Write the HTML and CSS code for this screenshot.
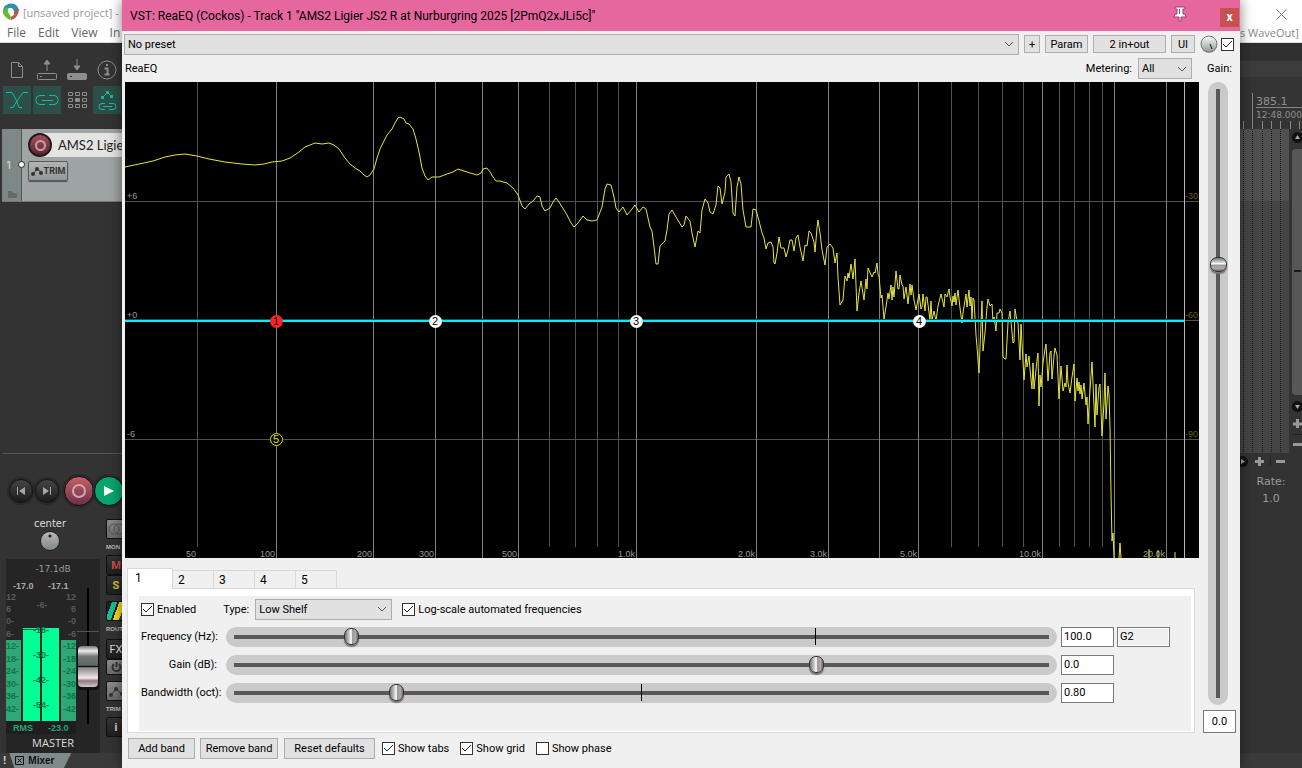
FILE: index.html
```
<!DOCTYPE html>
<html lang="en">
<head>
  <meta charset="UTF-8">
  <title>VST: ReaEQ (Cockos)</title>
  <link rel="stylesheet" href="styles.css">
</head>
<body>

<!-- Main window, left edge -->
<div class="host host-left">
  <div class="host-top">
    <div class="host-title">
      <svg class="logo" width="18" height="18" viewBox="0 0 18 18">
        <path d="M2 4C5 0 12-1 15 3l2 4-4 2-3-4-5 0-4 3z" fill="#2a8fb0"/>
        <path d="M1 7l4-3 2 2-2 4-4 1z" fill="#57b947"/>
        <path d="M12 8l5-2c0 5-3 10-8 11l-1-3 4-2z" fill="#b9594f"/>
        <path d="M1 8l4-1 4 7-1 3C4 15 1 12 1 8z" fill="#63bb2f"/>
        <path d="M6 6l3-1 3 4-3 5z" fill="#fff"/>
      </svg>
      <span>[unsaved project] -</span>
    </div>
    <nav class="menu">
      <a href="#">File</a><a href="#">Edit</a><a href="#">View</a><a href="#">In</a>
    </nav>
  </div>

  <div class="tools">
    <button class="tool" aria-label="New project"><svg width="28" height="28" viewBox="0 0 28 28"><path d="M8.500 6.500h7l4 4v11h-11zM15.500 6.500v4h4" /></svg></button>
    <button class="tool" aria-label="Open project"><svg width="28" height="28" viewBox="0 0 28 28"><path d="M14 15V5M11 8l3-4 3 4z" fill="#8c8f8e"/><rect x="4.500" y="17.500" width="19" height="6" rx="1"/><path d="M7 20.500h2" /></svg></button>
    <button class="tool" aria-label="Save project"><svg width="28" height="28" viewBox="0 0 28 28"><path d="M14 3v10M11 10l3 4 3-4z" fill="#8c8f8e"/><rect x="4.500" y="17.500" width="19" height="6" rx="1" fill="#8c8f8e"/><path d="M7 20.500h2" stroke="#333"/></svg></button>
    <button class="tool" aria-label="Project settings"><svg width="28" height="28" viewBox="0 0 28 28"><circle cx="14" cy="14" r="9"/><path d="M11.500 12.500h3v6M11.500 18.500h5M14 8v2" stroke-width="2"/></svg></button>
    <button class="tool on" aria-label="Auto-crossfade"><svg width="28" height="28" viewBox="0 0 28 28"><path d="M3 6.500h6l4 7 3 8h3M25 6.500h-5l-5 7-5 8H7"/></svg></button>
    <button class="tool on" aria-label="Item grouping"><svg width="28" height="28" viewBox="0 0 28 28"><path d="M12 9.500H7a4 4 0 0 0-4 4v1a4 4 0 0 0 4 4h5M16 9.500h5a4 4 0 0 1 4 4v1a4 4 0 0 1-4 4h-5M9 14.500h11"/></svg></button>
    <button class="tool" aria-label="Ripple editing"><svg width="28" height="28" viewBox="0 0 28 28"><path d="M5.500 6.500h4v3h-4zM12.500 6.500h4v3h-4zM19.500 6.500h4v3h-4zM5.500 12.500h4v3h-4zM19.500 12.500h4v3h-4zM5.500 18.500h4v3h-4zM12.500 18.500h4v3h-4zM19.500 18.500h4v3h-4z"/><path d="M12.500 12.500h4v3h-4z" fill="#8c8f8e"/></svg></button>
    <button class="tool on" aria-label="Move envelope points"><svg width="28" height="28" viewBox="0 0 28 28"><path d="M9.500 11.500l5-5 4 4"/><path d="M8.500 10.500h2v2h-2zM13.500 5.500h2v2h-2zM17.500 9.500h2v2h-2z" fill="#1abc98"/><path d="M12 17.500H9q-3 0-3 3t3 3h3M16 17.500h4q3 0 3 3t-3 3h-4M10 20.500h9"/></svg></button>
  </div>

  <div class="track">
    <div class="track-num">1
      <svg class="folder" width="9" height="7" viewBox="0 0 9 7"><path d="M0 0h4l1 2h4v5H0z" fill="#656b69"/></svg>
      <span class="track-io"></span>
    </div>
    <div class="track-main">
      <div class="track-name"><button class="rec" aria-label="Record arm"><span></span></button><span>AMS2 Ligie</span></div>
      <button class="trim"><svg width="12" height="10" viewBox="0 0 12 10"><path d="M2 8l4-5 4 3" fill="none" stroke="#333" stroke-width="1"/><circle cx="2" cy="8" r="2"/><circle cx="6" cy="3" r="2"/><circle cx="10" cy="7" r="2"/></svg>TRIM</button>
    </div>
  </div>

  <div class="transport">
    <button class="tbtn" aria-label="Go to start"><svg width="10" height="10" viewBox="0 0 10 10"><path d="M1 1h1v8H1zM9 1v8L3 5z" fill="#a5a8a7"/></svg></button>
    <button class="tbtn" aria-label="Go to end"><svg width="10" height="10" viewBox="0 0 10 10"><path d="M8 1h1v8H8zM1 1v8l6-4z" fill="#a5a8a7"/></svg></button>
    <button class="tbtn record" aria-label="Record"><span></span></button>
    <button class="tbtn play" aria-label="Play"><svg width="12" height="12" viewBox="0 0 12 12"><path d="M1 1v10l10-5z" fill="#fff"/></svg></button>
  </div>

  <div class="mixer">
    <div class="master">
      <div class="pan">center<span class="pan-knob"></span></div>
      <svg class="meter" width="94" height="194" viewBox="6 559 94 194">
        <rect x="6" y="559" width="94" height="194" fill="#252525"/>
        <rect x="6" y="721" width="70" height="13" fill="#1e1e1e"/>
        <path d="M6 640h15v81H6zM61 640h15v81H61z" fill="#2fa877"/>
        <path d="M23 628h17v93H23zM42 628h17v93H42z" fill="#00ff95"/>
        <path d="M23 629.500h17" stroke="#0b6d43"/>
        <text class="peak" x="53" y="572" text-anchor="middle">-17.1dB</text>
        <g class="val"><text x="13" y="589">-17.0</text><text x="48" y="589">-17.1</text></g>
        <g class="scale">
          <text x="6" y="600">12</text><text x="6" y="612">6</text><text x="6" y="624">0-</text><text x="6" y="637">6-</text>
          <text x="76" y="600" text-anchor="end">12</text><text x="76" y="612" text-anchor="end">6</text><text x="76" y="624" text-anchor="end">-0</text><text x="76" y="637" text-anchor="end">-6</text>
          <text x="42" y="608" text-anchor="middle">-6-</text>
        </g>
        <g class="scale lit">
          <text x="6" y="649">12-</text><text x="6" y="662">18-</text><text x="6" y="674">24-</text><text x="6" y="687">30-</text><text x="6" y="699">36-</text><text x="6" y="712">42-</text>
          <text x="76" y="649" text-anchor="end">-12</text><text x="76" y="662" text-anchor="end">-18</text><text x="76" y="674" text-anchor="end">-24</text><text x="76" y="687" text-anchor="end">-30</text><text x="76" y="699" text-anchor="end">-36</text><text x="76" y="712" text-anchor="end">-42</text>
          <text x="41" y="633" text-anchor="middle">-18-</text><text x="41" y="658" text-anchor="middle">-30-</text><text x="41" y="683" text-anchor="middle">-42-</text><text x="41" y="708" text-anchor="middle">-54-</text>
        </g>
        <g class="rms"><text x="13" y="731">RMS</text><text x="48" y="731">-23.0</text></g>
        <path d="M88 588v136" stroke="#000" stroke-width="2"/>
        <path d="M77 631.500h22" stroke="#555"/>
        <defs>
          <linearGradient id="cap" x2="0" y2="1">
            <stop offset="0" stop-color="#777"/><stop offset=".12" stop-color="#eee"/><stop offset=".25" stop-color="#777"/><stop offset=".47" stop-color="#5b6663"/><stop offset=".5" stop-color="#111"/><stop offset=".53" stop-color="#888"/><stop offset=".78" stop-color="#f3e6ea"/><stop offset=".85" stop-color="#96737d"/><stop offset="1" stop-color="#ccc"/>
          </linearGradient>
        </defs>
        <rect x="77" y="646" width="22" height="44" rx="4" fill="#111"/>
        <rect x="78" y="646" width="20" height="41" rx="4" fill="url(#cap)"/>
        <text class="mname" x="53" y="747" text-anchor="middle">MASTER</text>
      </svg>
    </div>
    <div class="strip">
      <button class="sbtn light" aria-label="Mono"><svg width="20" height="18" viewBox="0 0 20 18"><g fill="none" stroke="#555"><circle cx="7" cy="9" r="5"/><circle cx="12" cy="9" r="5"/></g></svg></button>
      <small>MON</small>
      <button class="sbtn mute">M</button>
      <button class="sbtn solo">S</button>
      <button class="sbtn route" aria-label="Routing"></button>
      <small>ROUT</small>
      <button class="sbtn fx">FX</button>
      <button class="sbtn light power" aria-label="Bypass"><svg width="20" height="14" viewBox="0 0 20 14"><path d="M7 4a4 4 0 1 0 5 0M9.500 2v5" fill="none" stroke="#333" stroke-width="2"/></svg></button>
      <button class="sbtn light env" aria-label="Envelopes"><svg width="20" height="16" viewBox="0 0 20 16"><path d="M4 12l5-6 6 5" fill="none" stroke="#333"/><circle cx="4" cy="12" r="2"/><circle cx="9" cy="6" r="2"/><circle cx="15" cy="11" r="2"/></svg></button>
      <small>TRIM</small>
      <button class="sbtn info">i</button>
    </div>
  </div>
  <div class="docker"><span>!</span><button class="dock-tab"><svg width="9" height="9" viewBox="0 0 9 9"><path d="M.5.5h8v8h-8zM2.500 2.500l4 4M6.500 2.500l-4 4" fill="none" stroke="#111"/></svg>Mixer</button></div>
</div>

<!-- Plugin window -->
<main class="plugin">
  <header class="titlebar">
    <h1>VST: ReaEQ (Cockos) - Track 1 "AMS2 Ligier JS2 R at Nurburgring 2025 [2PmQ2xJLi5c]"</h1>
    <button class="pin" aria-label="Pin window"><svg width="14" height="18" viewBox="0 0 14 18"><path d="M2 2h10v2h-2v5h2l1 3H8v4H6v-4H1l1-3h2V4H2z" fill="#fff" stroke="#a13b69"/><path d="M6.500 4v5" stroke="#a13b69"/></svg></button>
    <button class="close" aria-label="Close">x</button>
  </header>

  <div class="presets">
    <select class="preset" aria-label="Preset"><option>No preset</option></select>
    <button class="btn b-plus">+</button>
    <button class="btn b-param">Param</button>
    <button class="btn b-io">2 in+out</button>
    <button class="btn b-ui">UI</button>
    <svg class="wet" width="18" height="18" viewBox="0 0 18 18">
      <defs><linearGradient id="wet" x2="0" y2="1"><stop offset="0" stop-color="#fafafa"/><stop offset="1" stop-color="#919b9a"/></linearGradient></defs>
      <circle cx="9" cy="10" r="8" fill="#aaa"/><circle cx="9" cy="9" r="8" fill="url(#wet)" stroke="#777"/><path d="M10 9l2 5" stroke="#111" stroke-width="1"/>
    </svg>
    <input type="checkbox" aria-label="FX enabled" checked>
  </div>

  <div class="eq">
    <section class="eq-main">
      <div class="eq-head">
        <span>ReaEQ</span>
        <label for="metering">Metering:</label>
        <select id="metering"><option>All</option></select>
      </div>

      <svg class="plot" viewBox="125 82 1074 476">
        <rect x="125" y="82" width="1074" height="476" fill="#000"/>
        <g shape-rendering="crispEdges">
          <path class="minor" d="M197.500 82v465M549.500 82v465M575.500 82v465M597.500 82v465M618.500 82v465M951.500 82v465M978.500 82v465M1002.500 82v465M1023.500 82v465M1059.500 82v465M1074.500 82v465M1089.500 82v465M1102.500 82v465"/>
          <path class="minor" d="M125 201.500h1074M125 320.500h1074M125 439.500h1074"/>
          <path class="major" d="M276.500 82v476M373.500 82v476M435.500 82v476M482.500 82v476M518.500 82v476M636.500 82v476M756.500 82v476M828.500 82v476M879.500 82v476M918.500 82v476M1042.500 82v476M1114.500 82v476M1166.500 82v476"/>
          <path class="edge" d="M1184.500 82v476"/>
        </g>
        <g class="axis">
          <text x="127" y="199">+6</text><text x="127" y="318">+0</text><text x="127" y="437">-6</text>
        </g>
        <g class="axis" text-anchor="end">
          <text x="196" y="557">50</text><text x="275" y="557">100</text><text x="372" y="557">200</text><text x="434" y="557">300</text><text x="517" y="557">500</text><text x="635" y="557">1.0k</text><text x="755" y="557">2.0k</text><text x="827" y="557">3.0k</text><text x="917" y="557">5.0k</text><text x="1041" y="557">10.0k</text><text x="1165" y="557">20.0k</text>
        </g>
        <g class="axis db">
          <text x="1185" y="199">-30</text><text x="1185" y="318">-60</text><text x="1185" y="437">-90</text>
        </g>
        <path class="spectrum" d="M125 167L139 164 153 161 165 157 175 155 185 154 197 156 209 159 225 162 242 164 255 165 264 164 272 162 282 161 290 158 299 152 305 147 310 145 315 143 322 144 329 143 334 145 339 149 345 158 350 164 355 168 360 171 364 175 367 177 370 175 374 169 377 158 380 149 384 141 387 135 392 129 395 123 398 118 400 117 404 119 406 123 409 124 413 129 416 139 419 152 422 168 425 176 428 180 432 177 439 177 447 174 453 172 458 169 467 172 477 175 481 173 483 169 487 168 490 172 493 177 496 181 500 181 507 183 513 188 518 195 522 206 525 209 529 204 533 201 537 196 540 197 542 206 545 211 550 208 553 202 556 198 559 202 567 215 571 223 574 227 578 223 583 216 587 220 592 221 597 220 602 207 605 189 607 184 611 185 614 197 616 208 619 212 623 207 627 215 632 209 635 205 639 212 643 207 646 209 648 218 650 227 652 231 654 247 656 264 658 264 660 246 665 241 667 230 669 214 672 210 676 217 682 227 684 225 686 216 690 221 692 233 695 247 698 231 700 233 702 210 705 199 708 203 710 212 713 214 716 205 718 186 720 188 722 204 725 192 726 177 729 174 731 182 733 213 735 216 737 187 739 177 741 184 743 210 746 227 751 227 753 209 756 210 759 221 762 233 764 238 766 249 768 243 771 242 773 247 774 263 775 264 777 253 779 237 781 248 784 248 786 257 788 250 790 240 792 240 794 251 796 238 798 235 800 247 803 261 805 245 807 246 809 231 811 233 814 242 815 252 817 228 818 220 820 233 822 250 825 265 827 247 830 244 833 248 835 263 837 253 838 277 840 305 843 300 845 276 847 281 848 273 849 278 851 264 853 279 855 259 857 311 859 293 861 281 864 300 866 279 867 289 868 268 872 277 874 272 875 273 877 263 878 274 879 276 881 298 882 295 884 319 886 307 888 293 889 299 891 285 892 300 893 287 894 297 896 271 898 289 899 289 900 275 902 285 903 286 904 299 906 287 908 304 910 284 911 295 912 285 914 300 916 310 919 294 921 309 922 307 923 294 925 311 926 297 927 297 930 320 931 301 932 320 934 311 936 321 938 306 941 294 944 307 945 294 947 297 949 289 950 297 952 306 953 296 954 302 955 293 956 305 958 290 960 308 962 323 963 313 966 294 967 307 969 290 970 306 971 297 972 319 973 298 974 300 976 335 977 347 979 373 980 347 982 301 983 351 985 333 987 307 988 299 990 306 992 304 993 322 994 317 996 331 997 313 999 313 1000 309 1002 313 1003 357 1005 359 1006 359 1008 323 1010 311 1013 343 1014 342 1015 309 1017 321 1018 323 1020 360 1021 324 1024 380 1026 354 1027 367 1029 356 1030 369 1032 389 1033 363 1034 389 1037 360 1038 353 1039 406 1040 375 1041 387 1043 363 1045 349 1046 344 1048 381 1050 353 1051 351 1052 379 1054 356 1055 348 1057 355 1059 399 1061 366 1063 391 1065 383 1066 387 1067 365 1068 383 1070 393 1072 377 1074 364 1075 401 1077 378 1078 391 1079 382 1080 394 1081 385 1082 399 1084 383 1086 405 1087 397 1088 424 1090 390 1092 362 1095 427 1096 384 1097 415 1099 387 1100 384 1102 436 1104 403 1105 373 1106 419 1108 386 1109 395 1110 427 1111 493 1112 541 1113 533 1114 558M1119 558l1-15 1 15M1149 558v-9M1158 558v-8M1175 558v-6"/>
        <path d="M125 320.500h1059" stroke="#075c5c" stroke-width="3"/>
        <path d="M125 320.500h1059" stroke="#00f0ff" stroke-width="2" shape-rendering="crispEdges"/>
        <g class="nodes">
          <circle cx="276.500" cy="321.500" r="6.500"/><text x="276" y="325">1</text>
          <circle cx="435.500" cy="321.500" r="6.500"/><text x="435" y="325">2</text>
          <circle cx="636.500" cy="321.500" r="6.500"/><text x="636" y="325">3</text>
          <circle cx="919.500" cy="321.500" r="6.500"/><text x="919" y="325">4</text>
          <circle cx="276.500" cy="439.500" r="6" class="off"/><text x="276" y="443" class="off-text">5</text>
        </g>
      </svg>

      <div class="tabs" role="tablist">
        <button role="tab" aria-selected="true" class="tab active">1</button>
        <button role="tab" class="tab">2</button>
        <button role="tab" class="tab">3</button>
        <button role="tab" class="tab">4</button>
        <button role="tab" class="tab">5</button>
      </div>
      <div class="panel">
        <div class="band">
          <div class="band-head">
            <label class="check"><input type="checkbox" checked>Enabled</label>
            <label class="type-label" for="type">Type:</label>
            <select id="type"><option>Low Shelf</option></select>
            <label class="check"><input type="checkbox" checked>Log-scale automated frequencies</label>
          </div>
          <div class="param">
            <label for="freq">Frequency (Hz):</label>
            <input class="slider freq" id="freq" type="range" min="0" max="1000" value="144">
            <input class="num" type="text" value="100.0" aria-label="Frequency value">
            <input class="num note" type="text" value="G2" aria-label="Note" readonly>
          </div>
          <div class="param">
            <label for="gain">Gain (dB):</label>
            <input class="slider" id="gain" type="range" min="0" max="1000" value="715">
            <input class="num" type="text" value="0.0" aria-label="Gain value">
          </div>
          <div class="param">
            <label for="bw">Bandwidth (oct):</label>
            <input class="slider bw" id="bw" type="range" min="0" max="1000" value="200">
            <input class="num" type="text" value="0.80" aria-label="Bandwidth value">
          </div>
        </div>
      </div>

      <footer class="actions">
        <button class="btn b-add">Add band</button>
        <button class="btn b-remove">Remove band</button>
        <button class="btn b-reset">Reset defaults</button>
        <label class="check"><input type="checkbox" checked>Show tabs</label>
        <label class="check"><input type="checkbox" checked>Show grid</label>
        <label class="check"><input type="checkbox">Show phase</label>
      </footer>
    </section>

    <section class="master-gain">
      <label for="mgain">Gain:</label>
      <input class="vslider" id="mgain" type="range" min="0" max="1000" value="713">
      <input class="num gain-num" type="text" value="0.0" aria-label="Master gain value">
    </section>
  </div>
</main>

<!-- Main window, right edge -->
<div class="host host-right">
  <div class="host-top">
    <button class="host-close" aria-label="Close project"><svg width="11" height="11" viewBox="0 0 11 11"><path d="M.5.5l10 10M10.500.5l-10 10" stroke="#777"/></svg></button>
    <span class="device">s WaveOut]</span>
  </div>
  <svg class="arrange" width="62" height="430" viewBox="1240 43 62 430">
    <rect x="1240" y="43" width="62" height="18" fill="#303030"/>
    <rect x="1240" y="61" width="62" height="16" fill="#3c3c3c"/>
    <rect x="1240" y="77" width="62" height="52" fill="#343434"/>
    <rect x="1240" y="129" width="49" height="324" fill="#454545"/>
    <rect x="1240" y="129" width="49" height="72" fill="#505050"/>
    <path d="M1243.500 129v323M1252.500 129v323M1262.500 129v323M1271.500 129v323M1280.500 129v323" stroke="#191919" stroke-dasharray="1 1"/>
    <path d="M1252.500 93v36M1243.500 121v8M1262.500 121v8M1271.500 121v8M1280.500 121v8M1290.500 121v8M1299.500 121v8M1256 107.500h46" stroke="#858585"/>
    <g class="ruler"><text class="bar" x="1256" y="105">385.1</text><text x="1256" y="118">12:48.000</text></g>
    <rect x="1292" y="149" width="14" height="246" rx="4" fill="#575757"/>
    <path d="M1294 271h7" stroke="#1a1a1a" stroke-width="2"/>
    <g fill="#111"><circle cx="1297.500" cy="137.500" r="5.500"/><circle cx="1297.500" cy="406.500" r="5.500"/><circle cx="1242.500" cy="461.500" r="5.500"/></g>
    <g fill="#aaa"><path d="M1295 139h5l-2.500-4zM1295 405h5l-2.500 4zM1241 459v5l4-2.500z"/></g>
    <path d="M1293 424h9M1297.500 419v9M1293 444.500h9M1255 461.500h9M1259.500 457v9M1276 461.500h9" stroke="#999" stroke-width="3"/>
    <path d="M1293 434.500h9M1270.500 457v9" stroke="#222"/>
  </svg>
  <div class="rate">Rate:<br>1.0</div>
  <div class="host-bottom"></div>
</div>

</body>
</html>
```
FILE: styles.css
```
* {
  box-sizing: border-box;
}
body {
  margin: 0;
  height: 100vh;
  display: flex;
  overflow: hidden;
  background: #333;
  font-family: Roboto, sans-serif;
  font-size: 11px;
  color: #000;
}
button, input, select {
  font: inherit;
  color: inherit;
  margin: 0;
}
button {
  padding: 0;
  border: none;
  background: none;
}

/* Main window behind the plugin */
.host {
  flex: none;
  display: flex;
  flex-direction: column;
  overflow: hidden;
  background: #333;
  color: #999;
}
.host-left {
  width: 122px;
}
.host-right {
  width: 62px;
}
.host-top {
  flex: none;
  height: 43px;
  background: #fff;
  border-bottom: 1px solid #ddd;
  font-family: "Open Sans", sans-serif;
  white-space: nowrap;
}
.host-title {
  display: flex;
  align-items: center;
  gap: 3px;
  height: 24px;
  padding-left: 2px;
}
.host-title .logo {
  flex: none;
}
.menu {
  display: flex;
  gap: 12px;
  padding-left: 7px;
  font-size: 12px;
  line-height: 18px;
}
.menu a {
  color: #666;
  text-decoration: none;
}
.tools {
  display: grid;
  grid-template-columns: repeat(4, 28px);
  gap: 2px;
  padding: 13px 0 0 3px;
}
.tool {
  height: 28px;
}
.tool svg {
  display: block;
  fill: none;
  stroke: #8c8f8e;
}
.tool.on {
  background: #2c4f49;
}
.tool.on svg {
  stroke: #1abc98;
}
.track {
  flex: none;
  display: flex;
  height: 73px;
  margin: 15px 0 0 2px;
  border-bottom: 1px solid #777;
}
.track-num {
  position: relative;
  flex: none;
  display: flex;
  width: 20px;
  align-items: center;
  padding-left: 4px;
  background: #7e8886;
  border-right: 1px solid #555;
  color: #e8dfd5;
}
.folder {
  position: absolute;
  left: 6px;
  bottom: 3px;
}
.track-io {
  position: absolute;
  right: -4px;
  top: 32px;
  width: 7px;
  height: 7px;
  border: 1px solid #222;
  border-radius: 50%;
  background: #fff;
}
.track-main {
  flex: 1;
  min-width: 0;
  padding: 4px 0 0 6px;
  background: #9fa5a4;
}
.track-name {
  display: flex;
  align-items: center;
  gap: 6px;
  height: 24px;
  background: linear-gradient(to right, transparent 12px, #e4e5e3 12px);
  font-family: Lato, sans-serif;
  font-size: 13px;
  color: #222;
  white-space: nowrap;
}
.rec {
  flex: none;
  display: grid;
  place-items: center;
  width: 24px;
  height: 24px;
  border: 2px solid #221a1b;
  border-radius: 50%;
  background: linear-gradient(#a4525c, #5c2633);
}
.rec span {
  width: 11px;
  height: 11px;
  border: 2px solid #c7a0a4;
  border-radius: 50%;
}
.trim {
  display: flex;
  align-items: center;
  justify-content: center;
  gap: 1px;
  width: 40px;
  height: 20px;
  margin-top: 4px;
  border: 1px solid #555b59;
  border-radius: 2px;
  background: linear-gradient(#b0b5b4, #929897);
  box-shadow: 0 1px 1px #555;
  font-size: 9px;
  font-weight: bold;
  color: #333;
}
.trim svg, .env svg {
  fill: #333;
}
.transport {
  flex: none;
  display: flex;
  align-items: center;
  gap: 2px;
  height: 74px;
  margin: 251px 0 0 2px;
  padding-left: 7px;
  border-top: 1px solid #555;
}
.tbtn {
  flex: none;
  display: grid;
  place-items: center;
  width: 24px;
  height: 24px;
  border: 1px solid #111;
  border-radius: 50%;
  background: linear-gradient(#454545, #1c1c1c);
  box-shadow: 0 0 0 2px #292929;
}
.tbtn.record, .tbtn.play {
  width: 30px;
  height: 30px;
}
.tbtn.record {
  margin-left: 3px;
  background: linear-gradient(#c65f6a, #6b3148);
}
.tbtn.record span {
  width: 14px;
  height: 14px;
  border: 2px solid #d3a5ad;
  border-radius: 50%;
}
.tbtn.play {
  margin-left: -2px;
  background: #07a56d;
}
.mixer {
  flex: none;
  display: flex;
  gap: 6px;
  height: 226px;
  padding-left: 6px;
}
.master {
  flex: none;
  width: 94px;
  margin-top: -10px;
}
.pan {
  display: flex;
  flex-direction: column;
  align-items: center;
  height: 42px;
  padding-right: 6px;
  font: 10px/14px "DejaVu Sans", sans-serif;
  color: #ddd;
}
.pan-knob {
  width: 20px;
  height: 20px;
  border: 1px solid #222;
  border-radius: 50%;
  background: radial-gradient(circle at 50% 4px, #222 1px, transparent 2px), linear-gradient(#b6baba, #808585);
}
.meter {
  display: block;
  font-family: "Liberation Sans", sans-serif;
  font-size: 10px;
}
.meter .peak {
  font-family: "DejaVu Sans", sans-serif;
  font-size: 9px;
  fill: #999;
}
.meter .val {
  font-weight: bold;
  font-size: 9px;
  fill: #aaa;
}
.meter .scale {
  font-weight: bold;
  font-size: 9px;
  fill: #595959;
}
.meter .lit {
  fill: #12744a;
}
.meter .rms {
  font-weight: bold;
  font-size: 9px;
  fill: #2ba374;
}
.meter .mname {
  font-family: "Open Sans", sans-serif;
  font-size: 11px;
  fill: #ddd;
}
.strip {
  display: flex;
  flex-direction: column;
  width: 16px;
  margin-top: -8px;
}
.strip small {
  font-family: "Liberation Sans", sans-serif;
  font-size: 6px;
  line-height: 16px;
  font-weight: bold;
  color: #bbb;
}
.sbtn {
  flex: none;
  width: 20px;
  height: 20px;
  border: 1px solid #111;
  border-radius: 2px;
  background: linear-gradient(#333, #1f1f1f);
  font-size: 11px;
  font-weight: bold;
  color: #ddd;
}
.sbtn.light {
  background: linear-gradient(#8b8b8b, #6a6a6a);
}
.sbtn svg {
  display: block;
}
.sbtn.mute {
  color: #c95050;
}
.sbtn.solo {
  margin-bottom: 6px;
  color: #d8c040;
}
.sbtn.route {
  background: linear-gradient(110deg, #222 20%, #1abc98 20%, #1abc98 42%, #222 42%, #222 50%, #f5dc1e 50%, #f5dc1e 75%, #1f4a66 75%);
}
.sbtn.fx {
  margin-top: 2px;
  font-weight: normal;
}
.sbtn.power {
  height: 16px;
  margin-bottom: 6px;
}
.docker {
  flex: 1;
  display: flex;
  gap: 3px;
  padding-left: 3px;
  background: #3a3a3a;
  font: bold 10px/15px "Liberation Sans", sans-serif;
  color: #ddd;
}
.dock-tab {
  display: flex;
  align-items: center;
  gap: 4px;
  width: 62px;
  height: 15px;
  padding-left: 6px;
  background: #7f8a8b;
  clip-path: polygon(0 0, 100% 0, 88% 100%, 8% 100%);
  color: #111;
}

/* Plugin window */
.plugin {
  position: relative;
  flex: 1;
  min-width: 0;
  display: flex;
  flex-direction: column;
  background: #f0f0f0;
  box-shadow: 0 0 12px rgba(0,0,0,0.5);
}
.titlebar {
  flex: none;
  display: flex;
  align-items: center;
  height: 31px;
  padding-left: 8px;
  background: #e5679d;
}
.titlebar h1 {
  flex: 1;
  margin: 0;
  font-size: 12px;
  font-weight: normal;
}
.pin {
  margin-right: 33px;
}
.close {
  width: 19px;
  height: 19px;
  margin: 4px 1px 0 0;
  background: #c75050;
  color: #fff;
  font-size: 12px;
  font-weight: bold;
  line-height: 15px;
}
.presets {
  flex: none;
  display: flex;
  align-items: center;
  height: 26px;
  padding: 0 6px 0 2px;
}
.btn {
  height: 18px;
  border: 1px solid #adadad;
  background: #e1e1e1;
}
select {
  appearance: none;
  height: 21px;
  padding: 0 3px;
  border: 1px solid #adadad;
  border-radius: 0;
  background: #e1e1e1 url("data:image/svg+xml,%3Csvg xmlns='http://www.w3.org/2000/svg' width='10' height='6'%3E%3Cpath d='M1 1l4 4 4-4' fill='none' stroke='%23555'/%3E%3C/svg%3E") no-repeat right 4px center;
}
.preset {
  flex: 1;
}
.b-plus {
  width: 16px;
  margin-left: 5px;
}
.b-param {
  width: 43px;
  margin-left: 5px;
}
.b-io {
  width: 73px;
  margin-left: 5px;
}
.b-ui {
  width: 24px;
  margin-left: 5px;
}
.wet {
  margin: 0 3px 0 5px;
}
input[type="checkbox"] {
  appearance: none;
  flex: none;
  width: 13px;
  height: 13px;
  border: 1px solid #333;
  background: #fff;
}
input[type="checkbox"]:checked {
  background: #fff url("data:image/svg+xml,%3Csvg xmlns='http://www.w3.org/2000/svg' width='11' height='11'%3E%3Cpath d='M1 5l3 3 6-6' fill='none' stroke='%23222'/%3E%3C/svg%3E") no-repeat center;
}
.eq {
  flex: 1;
  display: flex;
}
.eq-main {
  flex: 1;
  min-width: 0;
  padding-left: 3px;
}
.eq-head {
  display: flex;
  align-items: center;
  height: 25px;
  padding: 0 7px 2px 0;
}
.eq-head span {
  flex: 1;
}
.eq-head select {
  width: 54px;
  margin-left: 6px;
}
.plot {
  display: block;
  width: 100%;
}
.minor {
  stroke: #505050;
}
.major {
  stroke: #808080;
}
.edge {
  stroke: #b8b8b8;
}
.axis {
  font: 9px "Liberation Sans", sans-serif;
  fill: #999;
}
.axis.db {
  fill: #66600c;
}
.spectrum {
  fill: none;
  stroke: #e6e63c;
  stroke-width: 1;
}
.nodes {
  font: 11px "Liberation Sans", sans-serif;
  text-anchor: middle;
}
.nodes circle {
  fill: #fff;
}
.nodes circle:first-child {
  fill: #ff2424;
}
.nodes circle.off {
  fill: #000;
  stroke: #e6e600;
}
.nodes .off-text {
  fill: #e6e600;
}

/* Band tabs */
.tabs {
  display: flex;
  align-items: flex-end;
  height: 30px;
  padding: 9px 0 0 2px;
  font-size: 12px;
}
.tab {
  width: 41px;
  height: 18px;
  padding-left: 5px;
  border: 1px solid #d9d9d9;
  border-width: 1px 1px 0 0;
  text-align: left;
}
.tab.active {
  position: relative;
  width: 46px;
  height: 21px;
  margin-bottom: -1px;
  padding: 0 0 2px 7px;
  border-left-width: 1px;
  background: #fff;
}
.panel {
  margin: 0 4px 0 2px;
  padding: 7px 3px 1px 11px;
  border: 1px solid #d9d9d9;
  background: #fff;
}
.band {
  display: flex;
  flex-direction: column;
  gap: 7px;
  min-height: 135px;
  padding: 3px 24px 0 2px;
  background: #f0f0f0;
}
.band-head {
  display: flex;
  align-items: center;
  height: 20px;
}
.band-head .type-label {
  margin-left: 27px;
}
.band-head select {
  width: 137px;
  margin: 0 10px 0 6px;
}
.check {
  display: flex;
  align-items: center;
  gap: 3px;
}
.param {
  display: grid;
  grid-template-columns: 76px 1fr 53px 53px;
  align-items: center;
  height: 21px;
}
.param label {
  text-align: right;
  white-space: nowrap;
}
.slider {
  appearance: none;
  width: auto;
  height: 20px;
  margin: 0 4px 0 9px;
  border-radius: 10px;
  background: linear-gradient(#585858, #585858) center / calc(100% - 16px) 4px no-repeat, #cacaca;
}
.slider.freq {
  background: linear-gradient(#000, #000) 71% center / 1px 17px no-repeat, linear-gradient(#585858, #585858) center / calc(100% - 16px) 4px no-repeat, #cacaca;
}
.slider.bw {
  background: linear-gradient(#000, #000) 50% center / 1px 17px no-repeat, linear-gradient(#585858, #585858) center / calc(100% - 16px) 4px no-repeat, #cacaca;
}
.slider::-webkit-slider-thumb {
  appearance: none;
  width: 15px;
  height: 17px;
  border: 1px solid #333;
  border-radius: 7px;
  background: linear-gradient(to right, #777, #bfc5c3 30%, #fff 48%, #999 58%, #b9a5ae 80%, #666);
  box-shadow: 0 2px 1px #777;
}
.num {
  width: 53px;
  height: 20px;
  padding: 0 2px;
  border: 1px solid #7a7a7a;
  background: #fff;
  font-size: 11px;
}
.num.note {
  margin-left: 3px;
  background: #f0f0f0;
  box-shadow: inset 0 0 0 1px #fff;
}
.actions {
  display: flex;
  align-items: center;
  height: 31px;
  padding-left: 3px;
}
.actions .btn {
  height: 21px;
}
.b-add {
  width: 67px;
}
.b-remove {
  width: 78px;
  margin-left: 5px;
}
.b-reset {
  width: 91px;
  margin: 0 7px 0 6px;
}
.actions .check {
  margin-right: 11px;
}

/* Master gain column */
.master-gain {
  display: flex;
  flex-direction: column;
  align-items: center;
  width: 41px;
}
.master-gain label {
  line-height: 23px;
  padding-bottom: 2px;
}
.vslider {
  appearance: none;
  writing-mode: vertical-lr;
  direction: rtl;
  width: 20px;
  flex: 1;
  border-radius: 10px;
  margin: 0 3px 5px 0;
  background: linear-gradient(#585858, #585858) center / 4px calc(100% - 14px) no-repeat, #cacaca;
}
.vslider::-webkit-slider-thumb {
  appearance: none;
  width: 17px;
  height: 15px;
  border: 1px solid #333;
  border-radius: 7px;
  background: linear-gradient(#777, #c5cbc9 30%, #fff 45%, #999 55%, #b9a5ae 80%, #666);
  box-shadow: 0 2px 1px #777;
}
.gain-num {
  width: 33px;
  height: 23px;
  margin-bottom: 35px;
  text-align: center;
}

/* Arrange view edge */
.host-close {
  display: block;
  margin: 5px 0 0 36px;
  height: 19px;
}
.host-close svg {
  display: block;
}
.device {
  display: block;
  line-height: 18px;
  color: #888;
}
.arrange {
  flex: none;
  font-family: "DejaVu Sans", sans-serif;
}
.ruler {
  fill: #909090;
  font-size: 9px;
}
.ruler .bar {
  font-size: 11px;
}
.rate {
  flex: 1;
  font: 11px/17px "DejaVu Sans", sans-serif;
  text-align: center;
}
.host-bottom {
  height: 15px;
  background: #3a3a3a;
}
```
